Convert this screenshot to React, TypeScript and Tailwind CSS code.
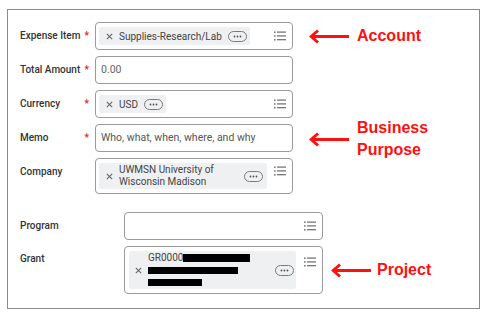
import React from 'react';

const ListIcon = () => (
  <svg width="12" height="10" viewBox="0 0 12 10" className="shrink-0">
    <g fill="#6b6b6b">
      <rect x="0" y="0.5" width="1.6" height="1.4" />
      <rect x="0" y="4.3" width="1.6" height="1.4" />
      <rect x="0" y="8.1" width="1.6" height="1.4" />
      <rect x="3" y="0.5" width="9" height="1.2" />
      <rect x="3" y="4.3" width="9" height="1.2" />
      <rect x="3" y="8.1" width="9" height="1.2" />
    </g>
  </svg>
);

const XIcon = () => (
  <svg width="7" height="7" viewBox="0 0 7 7" className="shrink-0">
    <path d="M0.8 0.8 L6.2 6.2 M6.2 0.8 L0.8 6.2" stroke="#666" strokeWidth="1.1" />
  </svg>
);

const MorePill = () => (
  <svg width="19" height="11" viewBox="0 0 19 11" className="shrink-0">
    <rect x="0.5" y="0.5" width="18" height="10" rx="5" fill="none" stroke="#7a7a7a" strokeWidth="1" />
    <circle cx="6.5" cy="5.5" r="0.9" fill="#555" />
    <circle cx="9.5" cy="5.5" r="0.9" fill="#555" />
    <circle cx="12.5" cy="5.5" r="0.9" fill="#555" />
  </svg>
);

const Arrow = () => (
  <svg width="41" height="15" viewBox="0 0 41 15" className="shrink-0">
    <path d="M2 7.5 H40" stroke="#ff1010" strokeWidth="3" />
    <path d="M9 1.5 L2.2 7.5 L9 13.5" stroke="#ff1010" strokeWidth="3" fill="none" strokeLinejoin="miter" />
  </svg>
);

const Label = ({ text, req, w = 'w-[75px]' }: { text: string; req?: boolean; w?: string }) => (
  <div className={`${w} shrink-0 flex justify-between pr-[6px] pt-[7px] leading-[14px] text-[10px] font-medium text-[#333]`}>
    <span>{text}</span>
    {req && <span className="text-[#e02020]">*</span>}
  </div>
);

// callout sits in a box of the row's height; taller text spills evenly above and below
const Note = ({ ml, gap, h, children }: { ml: string; gap: string; h: string; children: React.ReactNode }) => (
  <div className={`${ml} ${gap} ${h} flex items-center`}>
    <Arrow />
    <div className="font-['Liberation_Sans',Arial,sans-serif] font-bold text-[16px] leading-[22px] text-[#ff1010] whitespace-nowrap">
      {children}
    </div>
  </div>
);

const App: React.FC = () => {
  return (
    <div className="w-[487px] h-[317px] bg-white pt-[9px] pl-[7px] font-['Roboto',sans-serif]">
      <div className="w-[473px] h-[300px] border border-[#8a8a8a] pt-[12px] pl-[12px] flex flex-col gap-[6px]">
        {/* Expense Item */}
        <div className="flex items-start">
          <Label text="Expense Item" req />
          <div className="w-[198px] h-[28px] border border-[#9a9a9a] rounded-[4px] pl-[3px] pr-[6px] flex items-center justify-between">
            <div className="h-[18px] bg-[#eff0f1] rounded-[2px] flex items-center pl-[7px] pr-[3px]">
              <XIcon />
              <span className="ml-[6px] text-[10px] text-[#444]">Supplies-Research/Lab</span>
              <span className="ml-[6px]"><MorePill /></span>
            </div>
            <ListIcon />
          </div>
          <Note ml="ml-[16px]" gap="gap-[7px]" h="h-[28px]">Account</Note>
        </div>

        {/* Total Amount */}
        <div className="flex items-start">
          <Label text="Total Amount" req />
          <div className="w-[198px] h-[28px] border border-[#9a9a9a] rounded-[4px] pl-[5px] flex items-center text-[10.5px] text-[#666]">
            0.00
          </div>
        </div>

        {/* Currency */}
        <div className="flex items-start">
          <Label text="Currency" req />
          <div className="w-[198px] h-[28px] border border-[#9a9a9a] rounded-[4px] pl-[3px] pr-[6px] flex items-center justify-between">
            <div className="h-[18px] bg-[#eff0f1] rounded-[2px] flex items-center pl-[7px] pr-[3px]">
              <XIcon />
              <span className="ml-[6px] text-[10px] text-[#444]">USD</span>
              <span className="ml-[6px]"><MorePill /></span>
            </div>
            <ListIcon />
          </div>
        </div>

        {/* Memo */}
        <div className="flex items-start h-[28px]">
          <Label text="Memo" req />
          <div className="w-[198px] h-[28px] border border-[#9a9a9a] rounded-[4px] pl-[5px] flex items-center text-[10.5px] text-[#555]">
            Who, what, when, where, and why
          </div>
          <Note ml="ml-[16px]" gap="gap-[7px]" h="h-[30px]">
            Business
            <br />
            Purpose
          </Note>
        </div>

        {/* Company */}
        <div className="flex items-start">
          <Label text="Company" />
          <div className="w-[198px] h-[36px] border border-[#9a9a9a] rounded-[4px] pl-[3px] pr-[6px] pt-[4px] flex items-start justify-between">
            <div className="w-[168px] h-[26px] bg-[#eff0f1] rounded-[2px] flex items-center pl-[7px] pr-[4px]">
              <XIcon />
              <span className="ml-[6px] flex-1 text-[10px] leading-[12px] text-[#444]">
                UWMSN University of
                <br />
                Wisconsin Madison
              </span>
              <MorePill />
            </div>
            <div className="pt-[3px]"><ListIcon /></div>
          </div>
        </div>

        {/* Program */}
        <div className="flex items-start mt-[12px]">
          <Label text="Program" w="w-[104px]" />
          <div className="w-[199px] h-[28px] border border-[#9a9a9a] rounded-[4px] pr-[6px] flex items-center justify-end">
            <ListIcon />
          </div>
        </div>

        {/* Grant */}
        <div className="flex items-start">
          <div className="w-[104px] shrink-0 pt-[6px] leading-[14px] text-[10px] font-medium text-[#333]">Grant</div>
          <div className="w-[199px] h-[48px] border border-[#9a9a9a] rounded-[4px] pl-[4px] pr-[6px] pt-[4px] flex items-start justify-between">
            <div className="w-[167px] h-[38px] bg-[#eff0f1] rounded-[2px] flex items-center pl-[6px] pr-[2px]">
              <XIcon />
              <div className="ml-[6px] flex-1 flex flex-col gap-[5px] text-[10px] leading-[8px] text-[#444]">
                <div className="flex items-center">
                  <span>GR0000</span>
                  <span className="w-[67px] h-[8px] bg-black" />
                </div>
                <span className="w-[90px] h-[7px] bg-black" />
                <span className="w-[54px] h-[7px] bg-black" />
              </div>
              <MorePill />
            </div>
            <div className="pt-[6px]"><ListIcon /></div>
          </div>
          <Note ml="ml-[8px]" gap="gap-[5px]" h="h-[48px]">Project</Note>
        </div>
      </div>
    </div>
  );
};

export default App;
